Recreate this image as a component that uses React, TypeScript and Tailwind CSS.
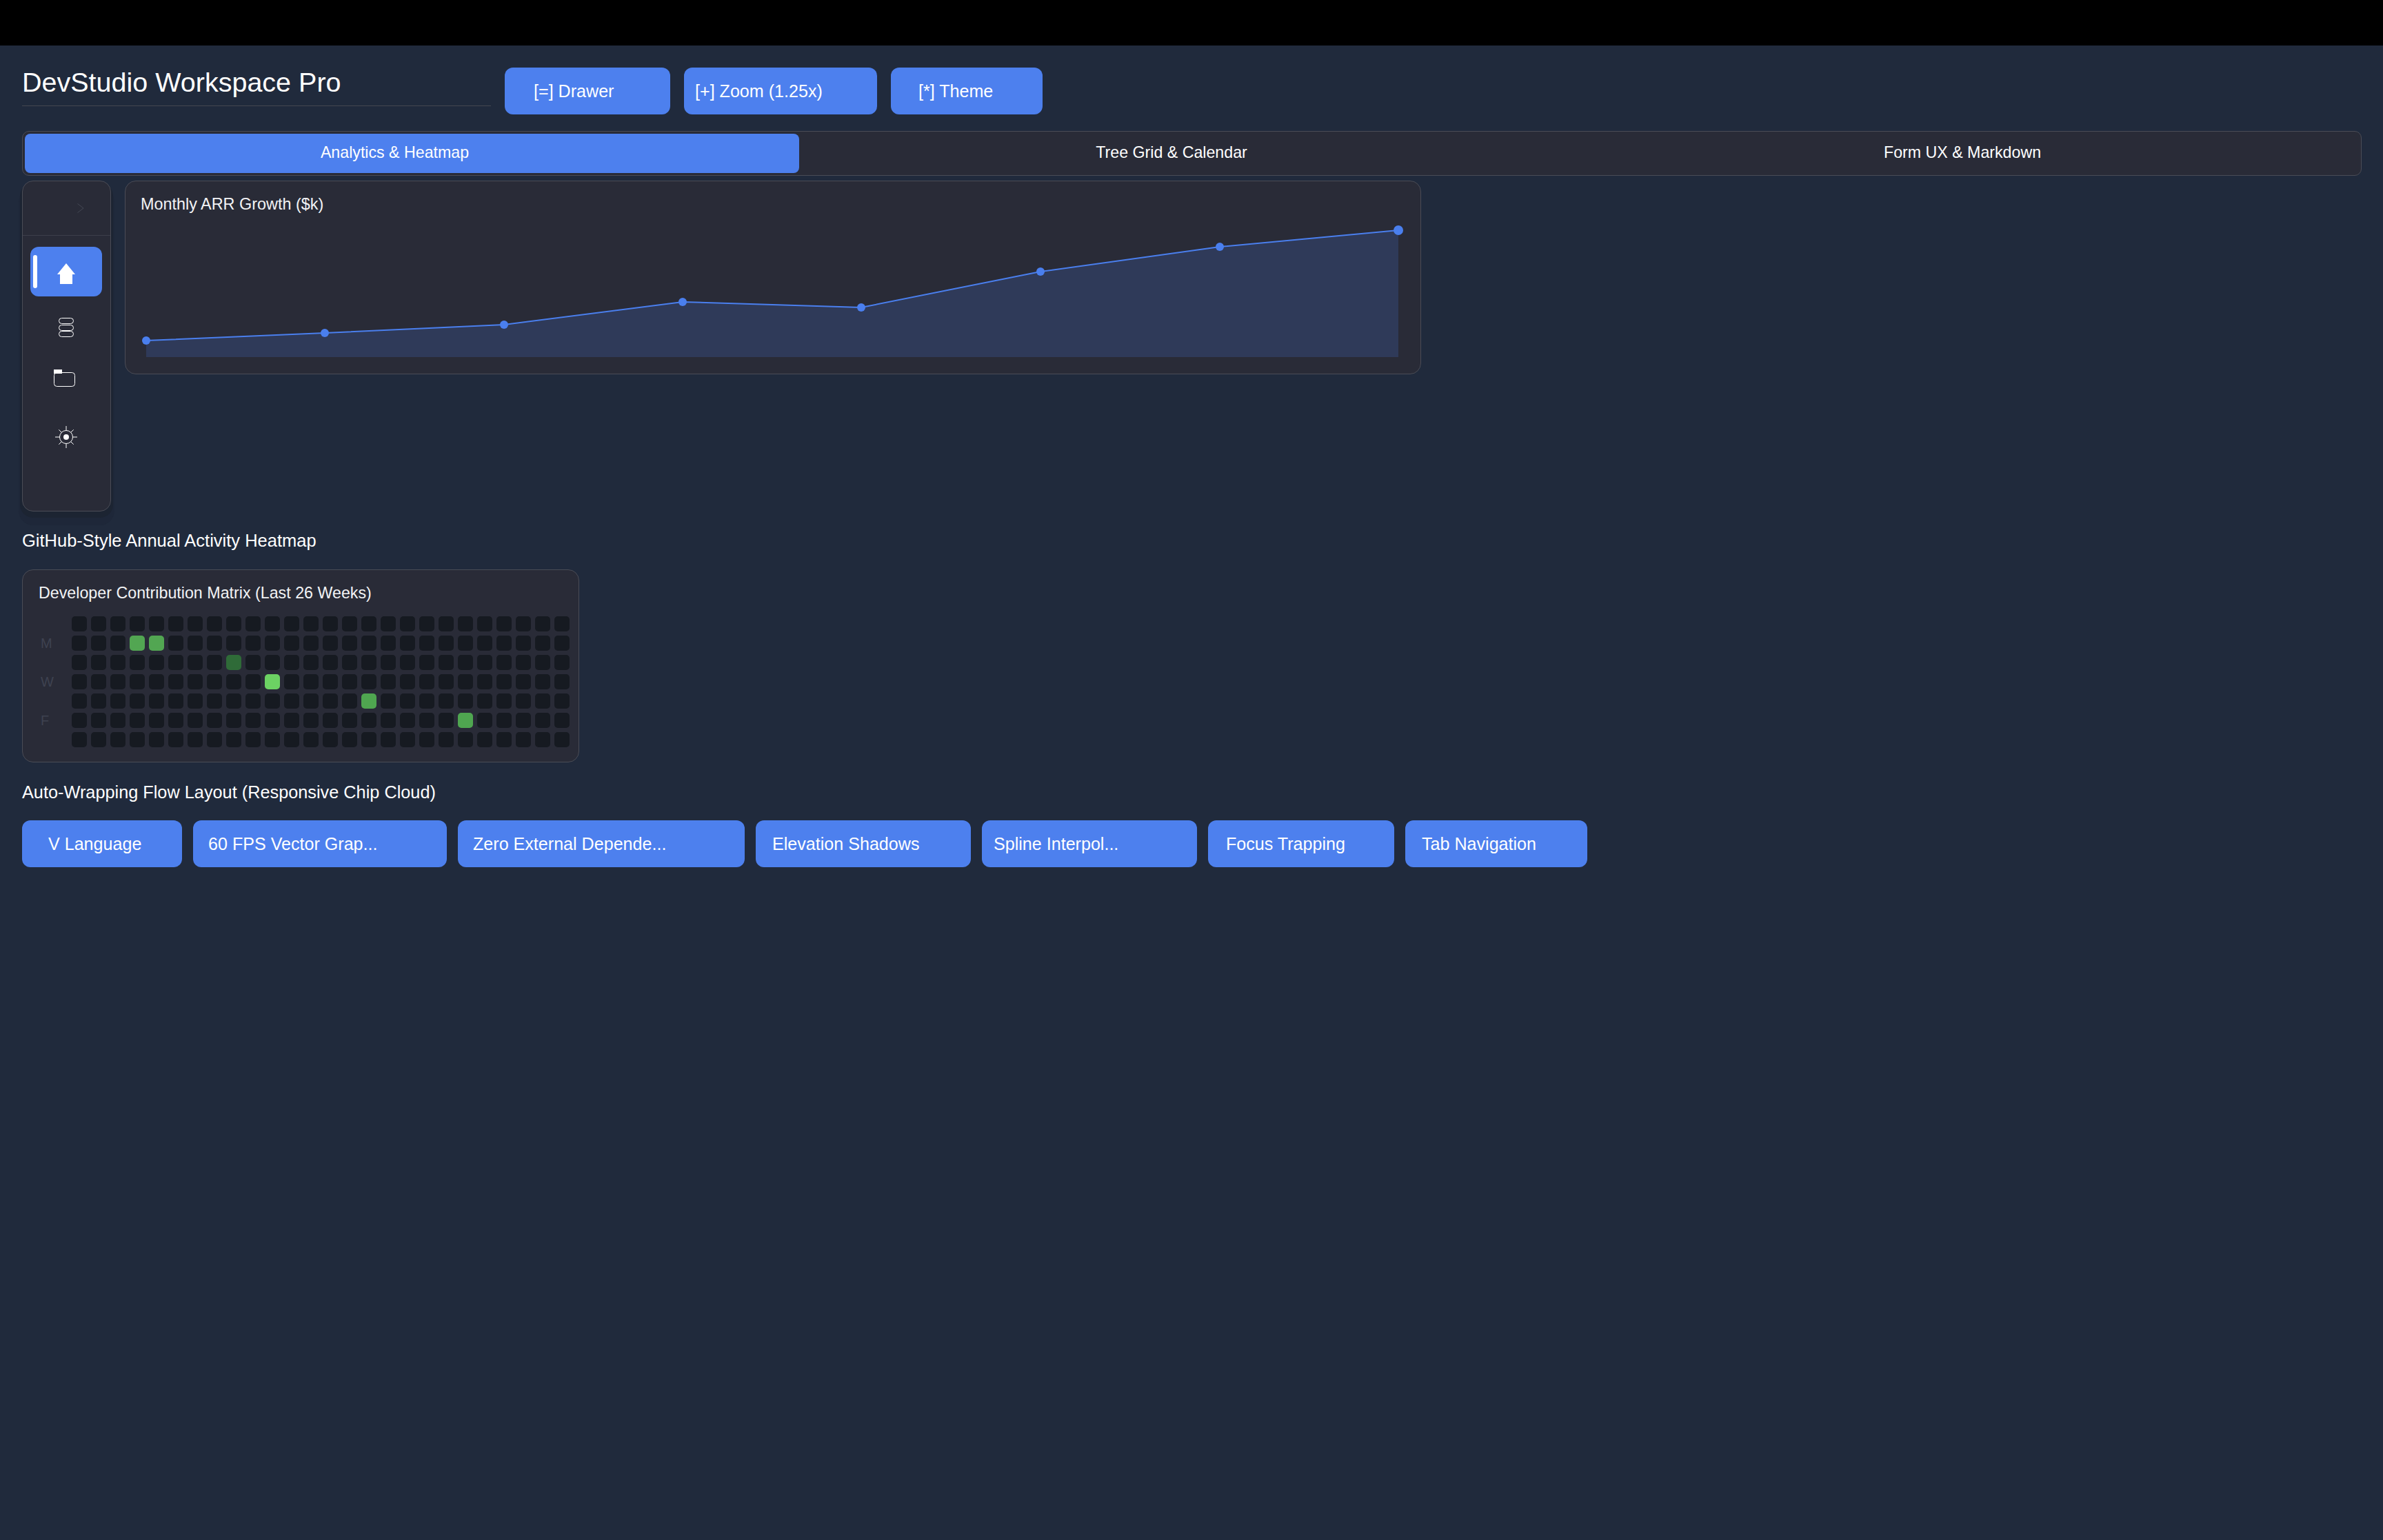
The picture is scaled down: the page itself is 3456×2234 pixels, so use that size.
const chartPoints = [
  [30, 185],
  [289, 174],
  [549, 162],
  [808, 129],
  [1067, 137],
  [1327, 85],
  [1587, 49],
  [1846, 25],
]

const activeCells: Record<string, string> = {
  '1-3': 'bg-[#52a652]',
  '1-4': 'bg-[#52a652]',
  '2-8': 'bg-[#2f6b38]',
  '3-10': 'bg-[#6cd263]',
  '4-15': 'bg-[#4fa650]',
  '5-20': 'bg-[#4fa650]',
}

const dayLabels = ['', 'M', '', 'W', '', 'F', '']
const weeks = Array.from({ length: 26 }, (_, i) => i)

const chips = [
  { label: 'V Language', className: 'w-[232px] pl-[38px]' },
  { label: '60 FPS Vector Grap...', className: 'w-[368px] pl-[22px]' },
  { label: 'Zero External Depende...', className: 'w-[416px] pl-[22px]' },
  { label: 'Elevation Shadows', className: 'w-[312px] pl-[24px]' },
  { label: 'Spline Interpol...', className: 'w-[312px] pl-[17px]' },
  { label: 'Focus Trapping', className: 'w-[270px] pl-[26px]' },
  { label: 'Tab Navigation', className: 'w-[264px] pl-[24px]' },
]

function BlueButton({ label, className }: { label: string; className: string }) {
  return (
    <button
      type="button"
      className={`flex h-[68px] shrink-0 items-center rounded-xl bg-[#4d80ee] pt-[2px] text-[25.1px] text-white ${className}`}
    >
      {label}
    </button>
  )
}

function Sidebar() {
  return (
    <aside className="flex h-[480px] w-[129px] shrink-0 flex-col rounded-2xl border border-[#4a4c56] bg-[#292b37] shadow-[0_6px_0_3px_#1c2432,0_15px_0_5px_#1e2739]">
      <div className="flex h-[79px] shrink-0 items-center justify-end border-b border-[#3d3f4a] pr-[38px]">
        <svg width="10" height="14" viewBox="0 0 10 14" fill="none" stroke="#454854" strokeWidth="1">
          <path d="M0.5 0.5 9 7 0.5 13.5" />
        </svg>
      </div>
      <div className="flex flex-col items-start pl-[11px] pt-[16px]">
        <div className="relative flex h-[72px] w-[104px] items-center justify-center rounded-xl bg-[#4d80ee]">
          <span className="absolute left-[4px] top-[12px] h-[48px] w-[6px] rounded-sm bg-white" />
          <svg className="mt-[6px]" width="26" height="30" viewBox="0 0 26 30" fill="white">
            <path d="M13 0 26 16H22V30H4V16H0Z" />
          </svg>
        </div>
        <svg className="ml-[41px] mt-[31px]" width="22" height="28" viewBox="0 0 22 28" fill="none" stroke="white" strokeWidth="1">
          <rect x="0.5" y="0.5" width="21" height="8" rx="4" />
          <rect x="0.5" y="10.5" width="21" height="8" rx="4" />
          <rect x="0.5" y="19.5" width="21" height="8" rx="4" />
        </svg>
        <svg className="ml-[34px] mt-[47px]" width="31" height="25" viewBox="0 0 31 25" fill="none" stroke="white" strokeWidth="1">
          <rect x="0.5" y="4.5" width="30" height="20" rx="4" />
          <rect x="0" y="0" width="12" height="6" fill="white" stroke="none" />
        </svg>
        <svg className="ml-[36px] mt-[57px]" width="32" height="32" viewBox="0 0 32 32" fill="none" stroke="white" strokeWidth="1">
          <circle cx="16" cy="16" r="9.5" />
          <circle cx="16" cy="16" r="4" fill="white" stroke="none" />
          <path d="M16 0V6.5M16 25.5V32M0 16H6.5M25.5 16H32M5.3 5.3 9.3 9.3M26.7 5.3 22.7 9.3M5.3 26.7 9.3 22.7M26.7 26.7 22.7 22.7" />
        </svg>
      </div>
    </aside>
  )
}

function ArrChart() {
  const line = chartPoints.map((p) => p.join(',')).join(' ')
  return (
    <section className="h-[281px] w-[1880px] rounded-2xl border border-[#4a4c56] bg-[#292b37]">
      <p className="pl-[22px] pt-[20px] text-[23.4px] leading-[26px] text-[#f2f3f5]">Monthly ARR Growth ($k)</p>
      <svg className="block" width="1876" height="232" viewBox="0 0 1876 232" fill="none">
        <polygon points={`30,209 ${line} 1846,209`} fill="#2f3a59" />
        <polyline points={line} stroke="#4a7fee" strokeWidth="2" />
        {chartPoints.map(([x, y], i) => (
          <circle key={x} cx={x} cy={y} r={i === chartPoints.length - 1 ? 7 : 6} fill="#4a7fee" />
        ))}
      </svg>
    </section>
  )
}

function Heatmap() {
  return (
    <section className="mt-[27px] h-[280px] w-[808px] rounded-2xl border border-[#4a4c56] bg-[#292b37]">
      <p className="pl-[23px] pt-[20px] text-[23.25px] leading-[26px] text-[#f2f3f5]">Developer Contribution Matrix (Last 26 Weeks)</p>
      <div className="ml-[26px] mt-[21px] grid grid-cols-[39px_repeat(26,22px)] grid-rows-[repeat(7,22px)] gap-[6px]">
        {dayLabels.map((day, row) => (
          <div key={row} className="contents">
            <span className="flex items-center text-[20px] leading-none text-[#3e4250]">{day}</span>
            {weeks.map((week) => (
              <span key={week} className={`rounded-[5px] ${activeCells[`${row}-${week}`] ?? 'bg-[#161a21]'}`} />
            ))}
          </div>
        ))}
      </div>
    </section>
  )
}

export default function App() {
  return (
    <div className="min-h-[2234px] bg-[#202a3c] font-['Liberation_Sans',Arial,sans-serif] text-white">
      <div className="h-[66px] bg-black" />
      <div className="px-[32px]">
        <div className="flex pt-[32px]">
          <h1 className="h-[56px] w-[680px] border-b border-[#44464f] text-[39.5px] leading-[43px]">DevStudio Workspace Pro</h1>
          <div className="ml-[20px] flex gap-[20px]">
            <BlueButton label="[=] Drawer" className="w-[240px] pl-[42px]" />
            <BlueButton label="[+] Zoom (1.25x)" className="w-[280px] pl-[16px]" />
            <BlueButton label="[*] Theme" className="w-[220px] pl-[40px]" />
          </div>
        </div>
        <div className="mt-[24px] flex h-[65px] w-[3393px] rounded-[10px] border border-[#4a4c56] bg-[#292b37] p-[3px] text-[23.2px]">
          <div className="flex w-[1123px] shrink-0 items-center justify-center rounded-lg bg-[#4d80ee] pb-[3px] pr-[50px]">Analytics &amp; Heatmap</div>
          <div className="flex w-[1131px] shrink-0 items-center justify-center pb-[3px] pr-[51px]">Tree Grid &amp; Calendar</div>
          <div className="flex w-[1131px] shrink-0 items-center justify-center pb-[3px] pr-[19px]">Form UX &amp; Markdown</div>
        </div>
        <div className="mt-[7px] flex gap-[20px]">
          <Sidebar />
          <ArrChart />
        </div>
        <h2 className="mt-[27px] text-[25.5px] font-normal leading-[30px]">GitHub-Style Annual Activity Heatmap</h2>
        <Heatmap />
        <h2 className="mt-[28px] text-[25.3px] font-normal leading-[30px]">Auto-Wrapping Flow Layout (Responsive Chip Cloud)</h2>
        <div className="mt-[26px] flex flex-wrap gap-[16px]">
          {chips.map((chip) => (
            <BlueButton key={chip.label} label={chip.label} className={chip.className} />
          ))}
        </div>
      </div>
    </div>
  )
}
